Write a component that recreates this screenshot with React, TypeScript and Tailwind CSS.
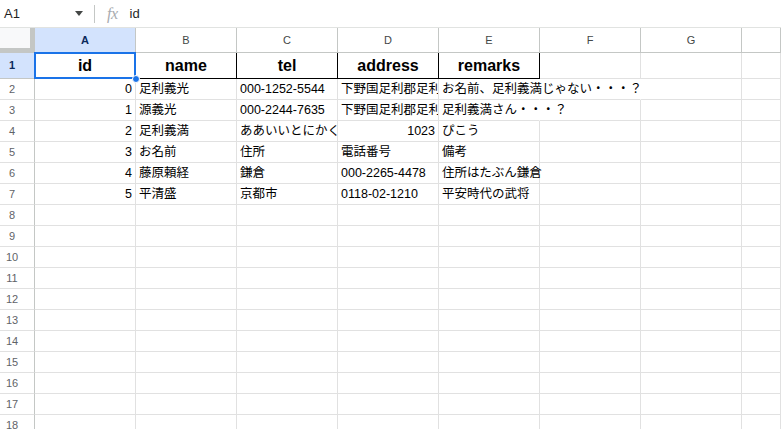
import React from "react";

type Cell = { t?: string; right?: boolean; clip?: boolean; noRight?: boolean };

const COLS = ["A", "B", "C", "D", "E", "F", "G", ""];

const DATA: Cell[][] = [
  [
    { t: "0", right: true },
    { t: "足利義光" },
    { t: "000-1252-5544" },
    { t: "下野国足利郡足利荘", clip: true },
    { t: "お名前、足利義満じゃない・・・？", noRight: true },
    { noRight: true },
    {},
    {},
  ],
  [
    { t: "1", right: true },
    { t: "源義光" },
    { t: "000-2244-7635" },
    { t: "下野国足利郡足利荘", clip: true },
    { t: "足利義満さん・・・？", noRight: true },
    {},
    {},
    {},
  ],
  [
    { t: "2", right: true },
    { t: "足利義満" },
    { t: "ああいいとにかく長い住所", clip: true },
    { t: "1023", right: true },
    { t: "ぴこう" },
    {},
    {},
    {},
  ],
  [
    { t: "3", right: true },
    { t: "お名前" },
    { t: "住所" },
    { t: "電話番号" },
    { t: "備考" },
    {},
    {},
    {},
  ],
  [
    { t: "4", right: true },
    { t: "藤原頼経" },
    { t: "鎌倉" },
    { t: "000-2265-4478" },
    { t: "住所はたぶん鎌倉" },
    {},
    {},
    {},
  ],
  [
    { t: "5", right: true },
    { t: "平清盛" },
    { t: "京都市" },
    { t: "0118-02-1210" },
    { t: "平安時代の武将" },
    {},
    {},
    {},
  ],
];

const HEAD = ["id", "name", "tel", "address", "remarks"];

function Toolbar() {
  return (
    <div className="h-[28px] flex items-center border-b border-[#e1e3e1] text-[13px] text-[#1f1f1f]">
      <div className="w-[94px] flex items-center pl-[4px]">
        <span>A1</span>
        <span className="ml-auto mr-[11px] w-0 h-0 border-l-[4px] border-r-[4px] border-t-[5px] border-l-transparent border-r-transparent border-t-[#444746]" />
      </div>
      <div className="w-px h-[18px] bg-[#c4c7c5]" />
      <span className="ml-[12px] italic text-[#a8abaf] text-[16px] font-['Liberation_Serif',serif] tracking-[-0.5px]">
        fx
      </span>
      <span className="ml-[12px]">id</span>
    </div>
  );
}

function ColumnHeader() {
  return (
    <div className="flex h-[25px]">
      <div className="w-[35px] shrink-0 bg-[#f8f9fa] border-r-[5px] border-b-[5px] border-[#c4c7c5]" />
      {COLS.map((c, i) => (
        <div
          key={i}
          className={
            (i === 7 ? "flex-1 " : "w-[101px] shrink-0 ") +
            "flex items-center justify-center border-r border-b border-[#c4c7c5] text-[11px] " +
            (i === 0 ? "bg-[#d3e3fd] font-bold text-[#0b2a5c]" : "text-[#444746]")
          }
        >
          {c}
        </div>
      ))}
    </div>
  );
}

function HeaderRow() {
  return (
    <div className="flex h-[26px]">
      <div className="w-[35px] shrink-0 bg-[#d3e3fd] border-r border-b border-[#c4c7c5] flex items-center">
        <span className="w-[24px] text-center text-[11px] font-bold text-[#0b2a5c]">1</span>
      </div>
      {COLS.map((c, i) => {
        const bordered = i < 5;
        return (
          <div
            key={i}
            className={
              (i === 7 ? "flex-1 " : "w-[101px] shrink-0 ") +
              "relative flex items-center justify-center border-r border-b text-[16px] font-bold text-black " +
              (bordered ? "border-black" : "border-[#e1e1e1]")
            }
          >
            {bordered ? HEAD[i] : ""}
            {i === 0 && (
              <>
                <div className="absolute left-[-1px] top-[-1px] right-[-1px] bottom-[-1px] border-2 border-[#1a73e8]" />
                <div className="absolute right-[-5px] bottom-[-5px] w-[8px] h-[8px] rounded-full bg-[#1a73e8] border border-white z-10" />
              </>
            )}
          </div>
        );
      })}
    </div>
  );
}

function DataRow({ n, cells }: { n: number; cells: Cell[] }) {
  return (
    <div className="flex h-[21px]">
      <div className="w-[35px] shrink-0 border-r border-r-[#c4c7c5] border-b border-b-[#e1e1e1] flex items-center">
        <span className="w-[24px] text-center text-[11px] text-[#5f6368]">{n}</span>
      </div>
      {COLS.map((c, i) => {
        const cell = cells[i] || {};
        return (
          <div
            key={i}
            className={
              (i === 7 ? "flex-1 " : "w-[101px] shrink-0 ") +
              "flex items-center border-b border-b-[#e1e1e1] border-r px-[3px] text-[12.5px] text-black whitespace-nowrap " +
              (cell.noRight ? "border-r-transparent " : "border-r-[#e1e1e1] ") +
              (cell.clip ? "overflow-hidden " : "overflow-visible ") +
              (cell.right ? "justify-end" : "justify-start")
            }
          >
            {cell.t ?? ""}
          </div>
        );
      })}
    </div>
  );
}

export default function App() {
  const rows: Cell[][] = [];
  for (let r = 0; r < 17; r++) rows.push(DATA[r] || []);
  return (
    <div className="w-[781px] h-[429px] overflow-hidden bg-white font-['Liberation_Sans','Noto_Sans_CJK_JP',sans-serif]">
      <Toolbar />
      <ColumnHeader />
      <HeaderRow />
      {rows.map((cells, i) => (
        <DataRow key={i} n={i + 2} cells={cells} />
      ))}
    </div>
  );
}
